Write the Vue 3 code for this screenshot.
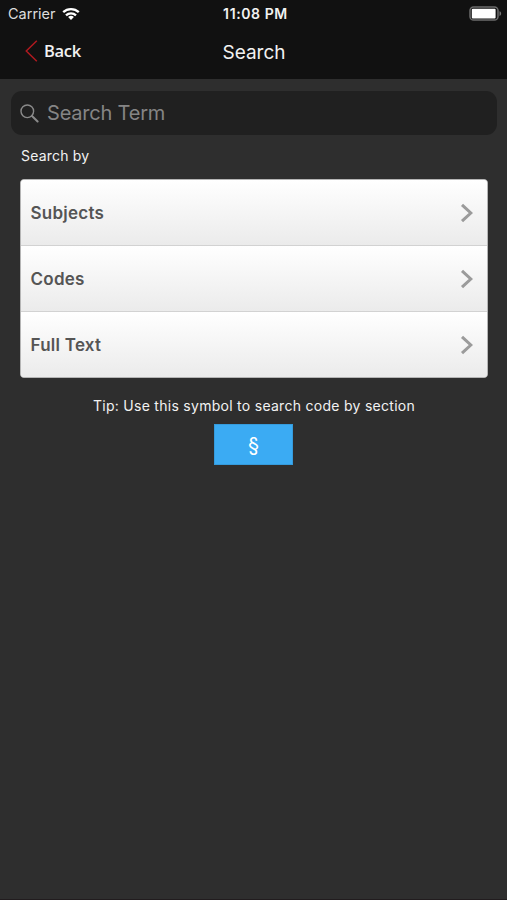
<script setup>
import { ref } from 'vue';

const options = ['Subjects', 'Codes', 'Full Text'];
const term = ref('');

const addSymbol = () => {
  term.value += '§';
};
</script>

<template>
  <div class="screen">
    <header class="top">
      <!-- Status bar -->
      <div class="status-bar">
        <div class="carrier">
          <span class="carrier-name">Carrier</span>
          <svg class="wifi" width="18" height="14" viewBox="0 0 18 14" fill="none" stroke="#fff" stroke-width="2.3">
            <path d="M1.2 5.2a11.2 11.2 0 0 1 15.6 0" />
            <path d="M4 8.3a7.2 7.2 0 0 1 10 0" />
            <path d="M9 13l-2.9-2.9a4.2 4.2 0 0 1 5.8 0z" fill="#fff" stroke="none" />
          </svg>
        </div>
        <span class="clock">11:08 PM</span>
        <svg class="battery" width="33" height="16" viewBox="0 0 33 16">
          <rect x="1" y="1" width="28" height="13" rx="3.6" fill="none" stroke="#6c6c6c" stroke-width="1.5" />
          <rect x="2.8" y="2.8" width="23.8" height="9.6" rx="1" fill="#fff" />
          <path d="M30.5 5.2c2.200.7 2.200 4 0 4.700z" fill="#777" />
        </svg>
      </div>

      <!-- Navigation bar -->
      <div class="nav-bar">
        <div class="back">
          <svg width="13" height="22" viewBox="0 0 13 22" fill="none" stroke="#b01a20" stroke-width="1.5">
            <path d="M11.8 .8L1.3 11l10.5 10.2" />
          </svg>
          <span class="back-label">Back</span>
        </div>
        <span class="title">Search</span>
      </div>
    </header>

    <main class="content">
      <div class="search-field">
        <svg width="19" height="19" viewBox="0 0 19 19" fill="none" stroke="#8a8a8a">
          <circle cx="7.3" cy="7.3" r="6.3" stroke-width="1.4" />
          <path d="M12 12l5.600 5.500" stroke-width="2" stroke-linecap="round" />
        </svg>
        <span class="placeholder">{{ term || 'Search Term' }}</span>
      </div>

      <p class="search-by">Search by</p>

      <ul class="options">
        <li v-for="option in options" :key="option" class="option">
          <span class="option-label">{{ option }}</span>
          <svg width="14" height="20" viewBox="0 0 14 20" fill="none" stroke="#9b9b9b" stroke-width="3">
            <path d="M2 1.8L10.8 10 2 18.2" />
          </svg>
        </li>
      </ul>

      <p class="tip">Tip: Use this symbol to search code by section</p>
      <button class="symbol" @click="addSymbol">§</button>
    </main>
  </div>
</template>

<style>
body {
  background: #2e2e2e;
}
</style>

<style scoped>
.screen {
  box-sizing: border-box;
  height: 900px;
  overflow: hidden;
  background: #2e2e2e;
  border-bottom: 1px solid #211c1e;
  color: #f2f2f2;
  font-family: Inter, "Liberation Sans", sans-serif;
}

.top {
  height: 79px;
  background: #111;
}

.status-bar {
  display: grid;
  grid-template-columns: 1fr auto 1fr;
  align-items: center;
  height: 27px;
  padding: 0 5px 0 8px;
}

.carrier {
  display: flex;
  align-items: center;
  gap: 6px;
}

.carrier-name {
  font-size: 14.5px;
  color: #ddd;
}

.clock {
  padding-left: 1px;
  font-size: 14px;
  font-weight: 600;
  letter-spacing: 0.6px;
}

.battery {
  justify-self: end;
}

.nav-bar {
  display: grid;
  grid-template-columns: 1fr auto 1fr;
  align-items: center;
  height: 51px;
  padding: 0 24px 0 25px;
}

.back {
  display: flex;
  align-items: center;
  gap: 6px;
  height: 48px;
  padding-bottom: 3px;
}

.back-label {
  font-family: "Open Sans", "Noto Sans", sans-serif;
  font-size: 16.5px;
  font-weight: 600;
  line-height: 22px;
  letter-spacing: -0.3px;
}

.title {
  font-size: 19px;
}

.content {
  display: flex;
  flex-direction: column;
  padding: 12px 10px 0 11px;
}

.search-field {
  display: flex;
  align-items: center;
  gap: 8px;
  height: 44px;
  padding-left: 9px;
  border-radius: 11px;
  background: #202020;
}

.placeholder {
  font-size: 20px;
  letter-spacing: -0.2px;
  color: #858585;
}

.search-by {
  margin: 11px 0 0 10px;
  font-size: 14px;
  line-height: 20px;
  letter-spacing: 0.2px;
}

.options {
  margin: 13px 9px 0;
  padding: 0;
  border: 1px solid #b5b5b5;
  border-radius: 4px;
  list-style: none;
  background: #fff;
  overflow: hidden;
}

.option {
  box-sizing: border-box;
  display: flex;
  align-items: center;
  justify-content: space-between;
  height: 66px;
  padding: 0 13px 0 9.5px;
  border-bottom: 1px solid #d2d2d2;
  background: linear-gradient(#fff, #ebebeb);
}

.option:last-child {
  height: 65px;
  padding-top: 1px;
  border-bottom: none;
}

.option-label {
  font-size: 17px;
  font-weight: 600;
  letter-spacing: 0.25px;
  color: #555;
}

.tip {
  margin: 18px 0 0;
  font-size: 14px;
  line-height: 20px;
  letter-spacing: 0.28px;
  text-align: center;
  white-space: nowrap;
}

.symbol {
  align-self: center;
  width: 79px;
  height: 41px;
  margin: 8px 1px 0 0;
  padding: 0;
  border: 1px solid #359bdc;
  background: #3babf3;
  color: #fff;
  font-family: inherit;
  font-size: 20px;
}
</style>
